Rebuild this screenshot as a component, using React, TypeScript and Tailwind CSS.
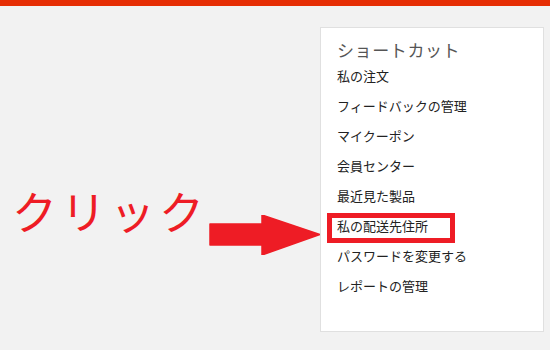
const items = [
  "私の注文",
  "フィードバックの管理",
  "マイクーポン",
  "会員センター",
  "最近見た製品",
  "私の配送先住所",
  "パスワードを変更する",
  "レポートの管理",
];

const App: React.FC = () => {
  return (
    <div
      className="w-[550px] h-[350px] bg-[#f2f2f2] overflow-hidden"
      style={{ fontFamily: '"Noto Sans CJK JP", "Noto Sans", sans-serif' }}
    >
      <div className="h-[6px] bg-[#e62e04]"></div>
      <div className="flex pt-[21px]">
        {/* annotation */}
        <div className="w-[320px] shrink-0 flex items-start">
          <div className="shrink-0 whitespace-nowrap ml-[12px] mt-[154px] text-[45px] leading-[60px] tracking-[4px] text-[#ee1c25]">
            クリック
          </div>
          <svg
            className="shrink-0 ml-auto mt-[188px]"
            width="111"
            height="40"
            viewBox="0 0 111 40"
          >
            <polygon
              points="1,9 53,9 53,0 111,19.5 53,40 53,30 1,30"
              fill="#ee1c25"
              stroke="#ee1c25"
              strokeWidth="1.5"
              strokeLinejoin="round"
            />
          </svg>
        </div>

        {/* shortcut card */}
        <div className="w-[224px] h-[305px] bg-white border border-[#e0e0e0] pl-[16px] pt-[11px]">
          <div className="h-[22px] leading-[22px] text-[17px] tracking-[0.6px] text-[#555] whitespace-nowrap">
            ショートカット
          </div>
          {items.map((label, i) => (
            <div
              key={label}
              className="relative h-[30px] flex items-center text-[13px] text-[#222] whitespace-nowrap"
            >
              {label}
              {i === 5 && (
                <div className="absolute left-[-10px] top-[2px] w-[128px] h-[30px] border-[5px] border-[#ee1c25]"></div>
              )}
            </div>
          ))}
        </div>
      </div>
    </div>
  );
};

export default App;
